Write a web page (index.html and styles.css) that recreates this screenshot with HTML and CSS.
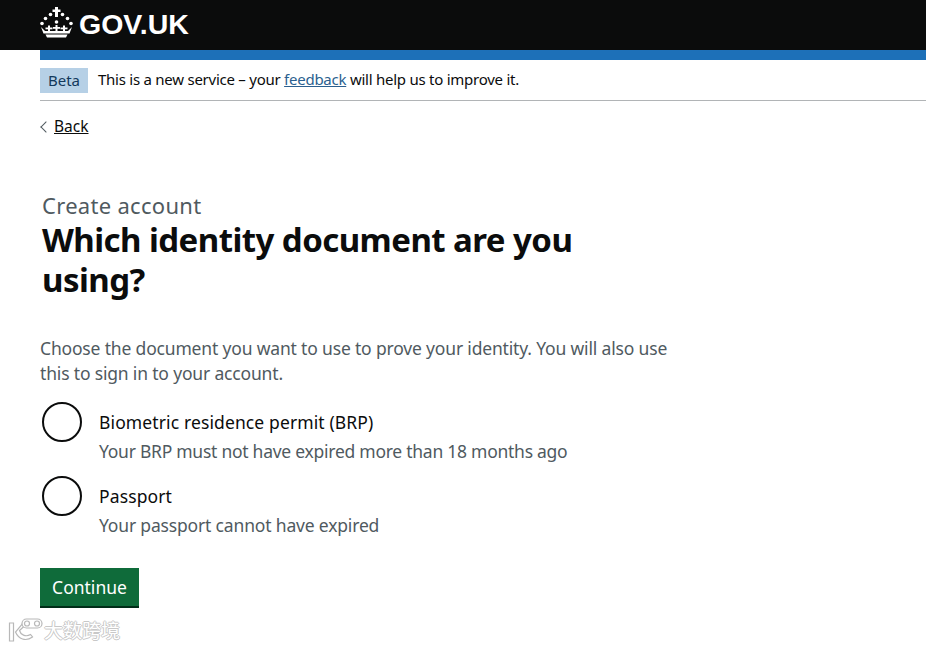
FILE: index.html
```html
<!DOCTYPE html>
<html lang="en">
<head>
<meta charset="utf-8">
<title>Which identity document are you using?</title>
<link rel="stylesheet" href="styles.css">
</head>
<body>
<header class="header">
  <a class="logo" href="#">
    <svg class="crown" width="33" height="32" viewBox="0 0 33 32" aria-hidden="true">
      <g fill="#fff">
        <rect x="15" y="0" width="3" height="10"/><rect x="12.500" y="2.500" width="8" height="2.500"/>
        <circle cx="10.500" cy="7.500" r="1.800"/><circle cx="22.500" cy="7.500" r="1.800"/>
        <circle cx="5.500" cy="11.500" r="1.800"/><circle cx="27.500" cy="11.500" r="1.800"/>
        <circle cx="2" cy="16.500" r="1.800"/><circle cx="31" cy="16.500" r="1.800"/>
        <circle cx="16.500" cy="15" r="1.800"/>
        <rect x="15.500" y="18" width="2" height="7"/><rect x="13" y="20" width="7" height="1.800"/>
        <rect x="8" y="18.500" width="2" height="6.500"/><rect x="5.500" y="20.500" width="7" height="1.800"/>
        <rect x="23" y="18.500" width="2" height="6.500"/><rect x="20.500" y="20.500" width="7" height="1.800"/>
        <path d="M1 20l4 4h23l4-4-2.500 6.500h-26z"/>
        <path d="M5.500 27.500h22l-1.500 3h-19z"/>
      </g>
    </svg>
    <span class="logo-text">GOV.UK</span>
  </a>
</header>
<div class="stripe"></div>
<div class="phase">
  <strong class="tag">Beta</strong>
  <span class="phase-text">This is a new service – your <a class="feedback" href="#">feedback</a> will help us to improve it.</span>
</div>
<main class="main">
  <a class="back" href="#">Back</a>
  <div class="caption">Create account</div>
  <h1 class="title">Which identity document are you using?</h1>
  <p class="intro">Choose the document you want to use to prove your identity. You will also use this to sign in to your account.</p>
  <div class="radios">
    <div class="radio">
      <span class="circle"></span>
      <div class="radio-body">
        <div class="radio-label">Biometric residence permit (BRP)</div>
        <div class="radio-hint">Your BRP must not have expired more than 18 months ago</div>
      </div>
    </div>
    <div class="radio">
      <span class="circle"></span>
      <div class="radio-body">
        <div class="radio-label">Passport</div>
        <div class="radio-hint hint-wide">Your passport cannot have expired</div>
      </div>
    </div>
  </div>
  <button class="button" type="button">Continue</button>
</main>
<div class="watermark">
  <svg class="watermark-logo" width="36" height="28" viewBox="0 0 36 28" aria-hidden="true">
    <g fill="#fff" stroke="#b8b8b8" stroke-width="1.200">
      <path d="M1.500 7h4v18h-4z"/>
      <path d="M15 7l2.500 2-6 5.500c1 4 6 7 11 4l2 2.500c-7 5-14 2-17-5z"/>
      <rect x="14" y="3" width="20" height="9" rx="4.500"/>
      <circle cx="19" cy="7.500" r="2.500"/><circle cx="29" cy="7.500" r="2.500"/>
    </g>
  </svg>
  <span class="watermark-text">大数跨境</span>
</div>
</body>
</html>
```

FILE: styles.css
```css
* { box-sizing: border-box; }
html, body { margin: 0; padding: 0; }
body {
  position: relative;
  width: 926px;
  height: 647px;
  overflow: hidden;
  background: #fff;
  color: #0b0c0c;
  font-family: "Noto Sans", "Liberation Sans", sans-serif;
}
.header { height: 50px; background: #0b0c0c; padding-left: 40px; }
.logo { display: flex; align-items: center; height: 46px; gap: 6px; color: #fff; text-decoration: none; }
.crown { flex: none; }
.logo-text { margin-top: 2px; font-family: "Liberation Sans", sans-serif; font-weight: 700; font-size: 28.500px; line-height: 44px; }
.stripe { height: 10px; margin-left: 40px; background: #1d70b8; }
.phase {
  display: flex; align-items: center; gap: 10px;
  height: 41px; margin-left: 40px;
  border-bottom: 1px solid #b1b4b6;
}
.tag { display: block; width: 48px; height: 25px; background: #b6d0e6; color: #12395c; font-weight: 400; font-size: 15px; line-height: 24px; text-align: center; }
.phase-text { margin-bottom: 2px; font-size: 15px; line-height: 25px; letter-spacing: -.25px; }
.feedback { color: #2b5f8f; }
.main { padding: 0 0 0 40px; }
.back { display: inline-block; margin-top: 15px; padding-left: 14px; position: relative; color: #0b0c0c; font-size: 15.500px; line-height: 21px; }
.back::before {
  content: ""; position: absolute; left: 2px; top: 7px; width: 7px; height: 7px;
  border-left: 1px solid #505a5f; border-bottom: 1px solid #505a5f; transform: rotate(45deg);
}
.caption { margin: 53px 0 0 2px; color: #505a5f; font-size: 22px; line-height: 30px; letter-spacing: .3px; }
.title { width: 560px; margin: 0 0 0 2px; font-size: 33px; line-height: 40px; font-weight: 700; letter-spacing: -.55px; }
.intro { width: 640px; margin: 36px 0 0; color: #505a5f; font-size: 17.500px; line-height: 25px; letter-spacing: -.17px; }
.radios { margin-top: 16px; display: flex; flex-direction: column; gap: 12px; }
.radio { display: flex; align-items: flex-start; padding-left: 2px; gap: 17px; }
.circle { flex: none; width: 40px; height: 40px; border: 2px solid #0b0c0c; border-radius: 50%; }
.radio-body { padding-top: 8px; }
.radio-label { font-size: 17.500px; line-height: 25px; letter-spacing: .12px; }
.radio-hint { margin-top: 4px; color: #505a5f; font-size: 17.500px; line-height: 25px; letter-spacing: -.26px; }
.hint-wide { letter-spacing: -.17px; }
.button {
  display: block; width: 99px; height: 40px; margin-top: 30px; padding: 0;
  border: 0; border-bottom: 2px solid #002d18; border-radius: 0;
  background: #0f6b3a; color: #fff; font: 400 17.500px/38px "Noto Sans", "Liberation Sans", sans-serif;
}
.watermark { position: absolute; left: 8px; top: 616px; display: flex; align-items: center; }
.watermark-logo { flex: none; }
.watermark-text {
  color: #fff; font: 400 19px/24px "Noto Sans CJK SC", sans-serif;
  text-shadow: 1px 0 #c8c8c8, -1px 0 #c8c8c8, 0 1px #c8c8c8, 0 -1px #c8c8c8;
}
```
